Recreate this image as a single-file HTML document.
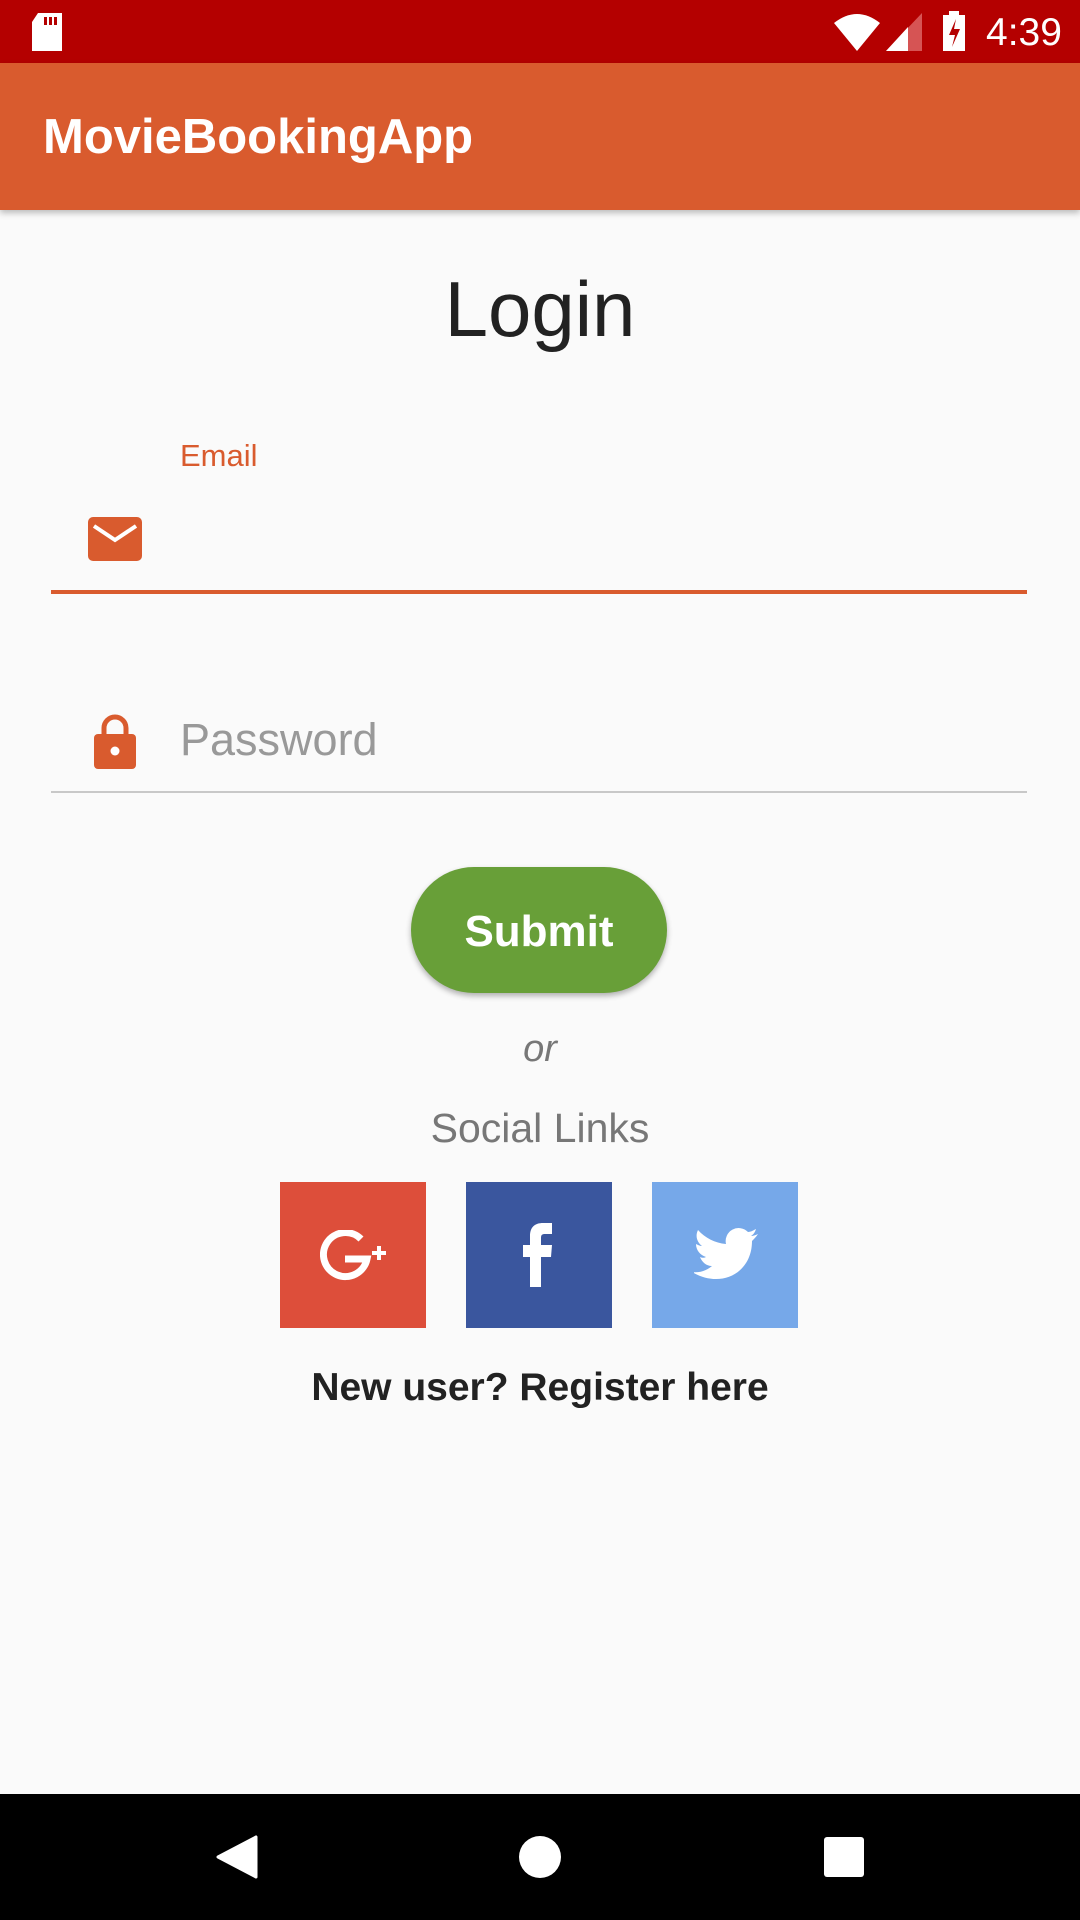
<!DOCTYPE html>
<html><head><meta charset="utf-8"><style>
body{margin:0;width:1080px;height:1920px;background:#fafafa;position:relative;overflow:hidden;font-family:"Liberation Sans",sans-serif}
.a{position:absolute}
</style></head><body>
<div class="a" style="left:0;top:0;width:1080px;height:63px;background:#b40000"></div>
<svg class="a" style="left:30px;top:12px" width="36" height="40" viewBox="0 0 36 40"><path d="M8 1h24v38H2V10z" fill="#fff" rx="3"/><rect x="14" y="5" width="3" height="8" fill="#b40000"/><rect x="19" y="5" width="3" height="8" fill="#b40000"/><rect x="24" y="5" width="3" height="8" fill="#b40000"/></svg>
<svg class="a" style="left:834px;top:13px" width="46" height="38" viewBox="0 0 46 38"><path d="M0 10 Q23 -8 46 10 L23 38z" fill="#fff"/></svg>
<svg class="a" style="left:886px;top:13px" width="36" height="38" viewBox="0 0 36 38"><path d="M36 0V38H0z" fill="#d65454"/><path d="M22 14V38H0z" fill="#fff"/></svg>
<svg class="a" style="left:942px;top:11px" width="24" height="40" viewBox="0 0 24 40"><rect x="7" y="0" width="10" height="4" fill="#fff"/><rect x="1" y="4" width="22" height="36" fill="#fff"/><path d="M14 8L7 24h6l-3 12 8-18h-6z" fill="#b40000"/></svg>
<div class="a" style="left:986px;top:8px;color:#fff;font-size:39px;line-height:50px">4:39</div>
<div class="a" style="left:0;top:63px;width:1080px;height:147px;background:#d95b2e;box-shadow:0 3px 6px rgba(0,0,0,.25)"></div>
<div class="a" style="left:43px;top:107px;color:#fff;font-size:49px;font-weight:bold;line-height:60px">MovieBookingApp</div>
<div class="a" style="left:0;width:1080px;top:262px;text-align:center;font-size:78px;color:#222;line-height:94px;font-weight:300">Login</div>
<div class="a" style="left:180px;top:437px;color:#d95b2e;font-size:31px;line-height:38px">Email</div>
<svg class="a" style="left:88px;top:517px" width="54" height="44" viewBox="0 0 54 44"><rect width="54" height="44" rx="5" fill="#d95b2e"/><path d="M6 9l21 14 21-14" stroke="#fff" stroke-width="4" fill="none"/></svg>
<div class="a" style="left:51px;top:590px;width:976px;height:4px;background:#d95b2e"></div>
<svg class="a" style="left:94px;top:713px" width="42" height="56" viewBox="0 0 42 56"><path d="M10 22V15a11 11 0 0 1 22 0v7" stroke="#d95b2e" stroke-width="5" fill="none"/><rect x="0" y="21" width="42" height="35" rx="4" fill="#d95b2e"/><circle cx="21" cy="38" r="4.5" fill="#fff"/></svg>
<div class="a" style="left:180px;top:712px;color:#999;font-size:45px;line-height:56px">Password</div>
<div class="a" style="left:51px;top:791px;width:976px;height:2px;background:#c8c8c8"></div>
<div class="a" style="left:411px;top:867px;width:256px;height:126px;border-radius:63px;background:#689f38;box-shadow:0 3px 6px rgba(0,0,0,.3);color:#fff;font-size:44px;font-weight:bold;text-align:center;line-height:130px">Submit</div>
<div class="a" style="left:0;width:1080px;top:1026px;text-align:center;font-size:38px;font-style:italic;color:#777;line-height:46px">or</div>
<div class="a" style="left:0;width:1080px;top:1103px;text-align:center;font-size:41px;color:#777;line-height:50px">Social Links</div>
<div class="a" style="left:280px;top:1182px;width:146px;height:146px;background:#dd4e3a"></div>
<svg class="a" style="left:320px;top:1230px" width="68" height="52" viewBox="0 0 68 52"><path d="M41 9A22 22 0 1 0 47 29H25" stroke="#fff" stroke-width="7" fill="none"/><path d="M59 16v14M52 23h14" stroke="#fff" stroke-width="4"/></svg>
<div class="a" style="left:466px;top:1182px;width:146px;height:146px;background:#3a569e"></div>
<svg class="a" style="left:523px;top:1223px" width="32" height="64" viewBox="0 0 32 64"><path d="M7 64V34H0V22h7v-9C7 4 12 0 20 0h9v11h-7c-3 0-4 1-4 4v7h11l-1 12H18v30z" fill="#fff"/></svg>
<div class="a" style="left:652px;top:1182px;width:146px;height:146px;background:#76a8e9"></div>
<svg class="a" style="left:694px;top:1228px" width="64" height="54" viewBox="0 0 64 54"><path d="M64 6c-2 1-5 2-7 2 3-2 4-4 5-7-2 1-5 3-8 3a13 13 0 0 0-22 12C21 15 11 10 4 2c-3 6-1 12 4 16-2 0-4-1-6-2 0 6 4 11 10 13-2 1-4 1-6 0 2 5 6 9 12 9-6 5-13 7-20 6 28 17 60 2 60-31 2-2 4-4 6-7z" fill="#fff"/></svg>
<div class="a" style="left:0;width:1080px;top:1363px;text-align:center;font-size:39px;font-weight:bold;color:#222;line-height:50px">New user? Register here</div>
<div class="a" style="left:0;top:1794px;width:1080px;height:126px;background:#000"></div>
<svg class="a" style="left:216px;top:1835px" width="42" height="44" viewBox="0 0 42 44"><path d="M40 2V42L2 22z" fill="#fff" stroke="#fff" stroke-width="3" stroke-linejoin="round"/></svg>
<div class="a" style="left:519px;top:1836px;width:42px;height:42px;border-radius:50%;background:#fff"></div>
<div class="a" style="left:824px;top:1837px;width:40px;height:40px;border-radius:3px;background:#fff"></div>
</body></html>
